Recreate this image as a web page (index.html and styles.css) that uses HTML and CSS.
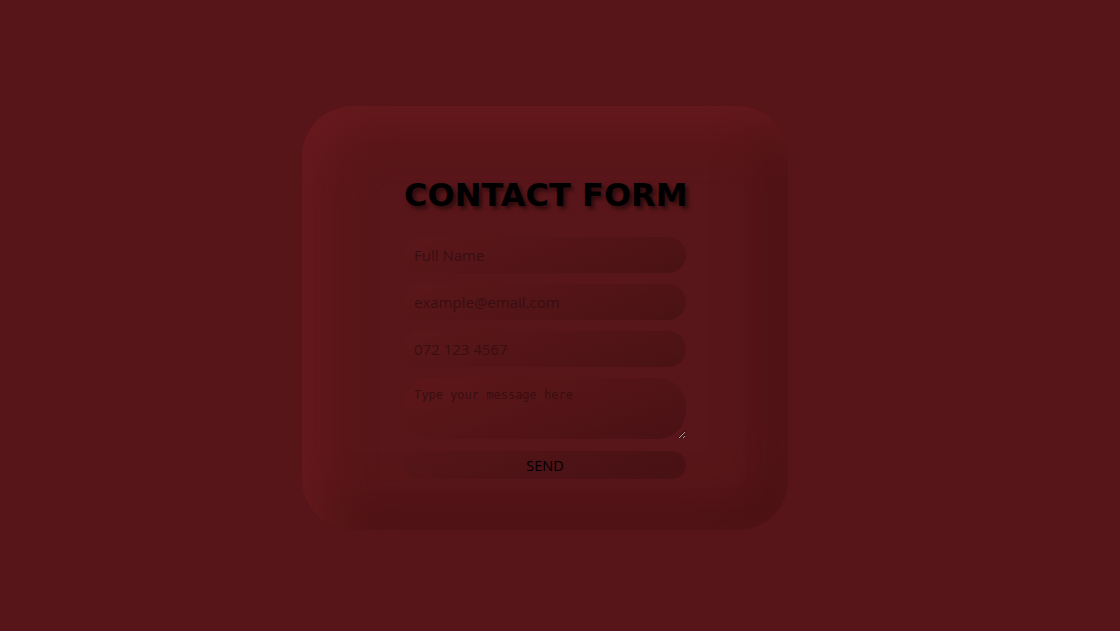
FILE: index.html
```html
<!DOCTYPE html>
<html lang="en">
<head>
<meta charset="utf-8">
<title>Contact Form</title>
<link rel="stylesheet" href="styles.css">
</head>
<body>
  <div class="card">
    <h1 class="title">CONTACT FORM</h1>
    <form class="form">
      <input class="field" type="text" placeholder="Full Name">
      <input class="field" type="email" placeholder="example@email.com">
      <input class="field" type="tel" placeholder="072 123 4567">
      <textarea class="field message" placeholder="Type your message here"></textarea>
      <button class="send" type="button">SEND</button>
    </form>
  </div>
</body>
</html>
```

FILE: styles.css
```css
html, body {
  margin: 0;
  height: 100%;
}
body {
  background: #581519;
  display: flex;
  align-items: center;
  justify-content: center;
  padding-right: 30px;
  padding-top: 4px;
  box-sizing: border-box;
}
.card {
  width: 486px;
  box-sizing: border-box;
  padding: 50px 102px 51px;
  border-radius: 50px;
  background: #59161a;
  box-shadow: inset 18px 18px 50px #681a1e, inset -18px -18px 50px #461113;
}
.title {
  margin: 21px 0 23px;
  font-family: "DejaVu Sans", sans-serif;
  font-weight: bold;
  font-size: 32px;
  line-height: 37px;
  color: #000;
  text-align: center;
  white-space: nowrap;
  text-shadow: 3px 3px 4px rgba(0, 0, 0, 0.55);
}
.form {
  display: flex;
  flex-direction: column;
}
.field {
  display: block;
  width: 282px;
  height: 36px;
  box-sizing: border-box;
  margin: 0 0 11px;
  padding: 0 10px;
  border: none;
  outline: none;
  border-radius: 18px;
  font-family: "Open Sans", sans-serif;
  font-size: 15px;
  color: #2a0a0c;
  background: linear-gradient(160deg, #5c171b 0%, #531417 50%, #4a1214 100%);
}
.field::placeholder {
  color: #380e10;
}
.message {
  height: 61px;
  margin-bottom: 12px;
  padding: 10px 10px;
  border-radius: 28px;
  font-family: "DejaVu Sans Mono", monospace;
  font-size: 12px;
  background: linear-gradient(160deg, #5e171b 0%, #541417 50%, #491114 100%);
}
.message::placeholder {
  color: #380e10;
}
.send {
  width: 282px;
  height: 28px;
  border: none;
  border-radius: 14px;
  font-family: "Open Sans", sans-serif;
  font-size: 14.5px;
  color: #000;
  background: linear-gradient(160deg, #561518 0%, #4e1316 50%, #481114 100%);
  padding: 2px 0 0;
}
```
